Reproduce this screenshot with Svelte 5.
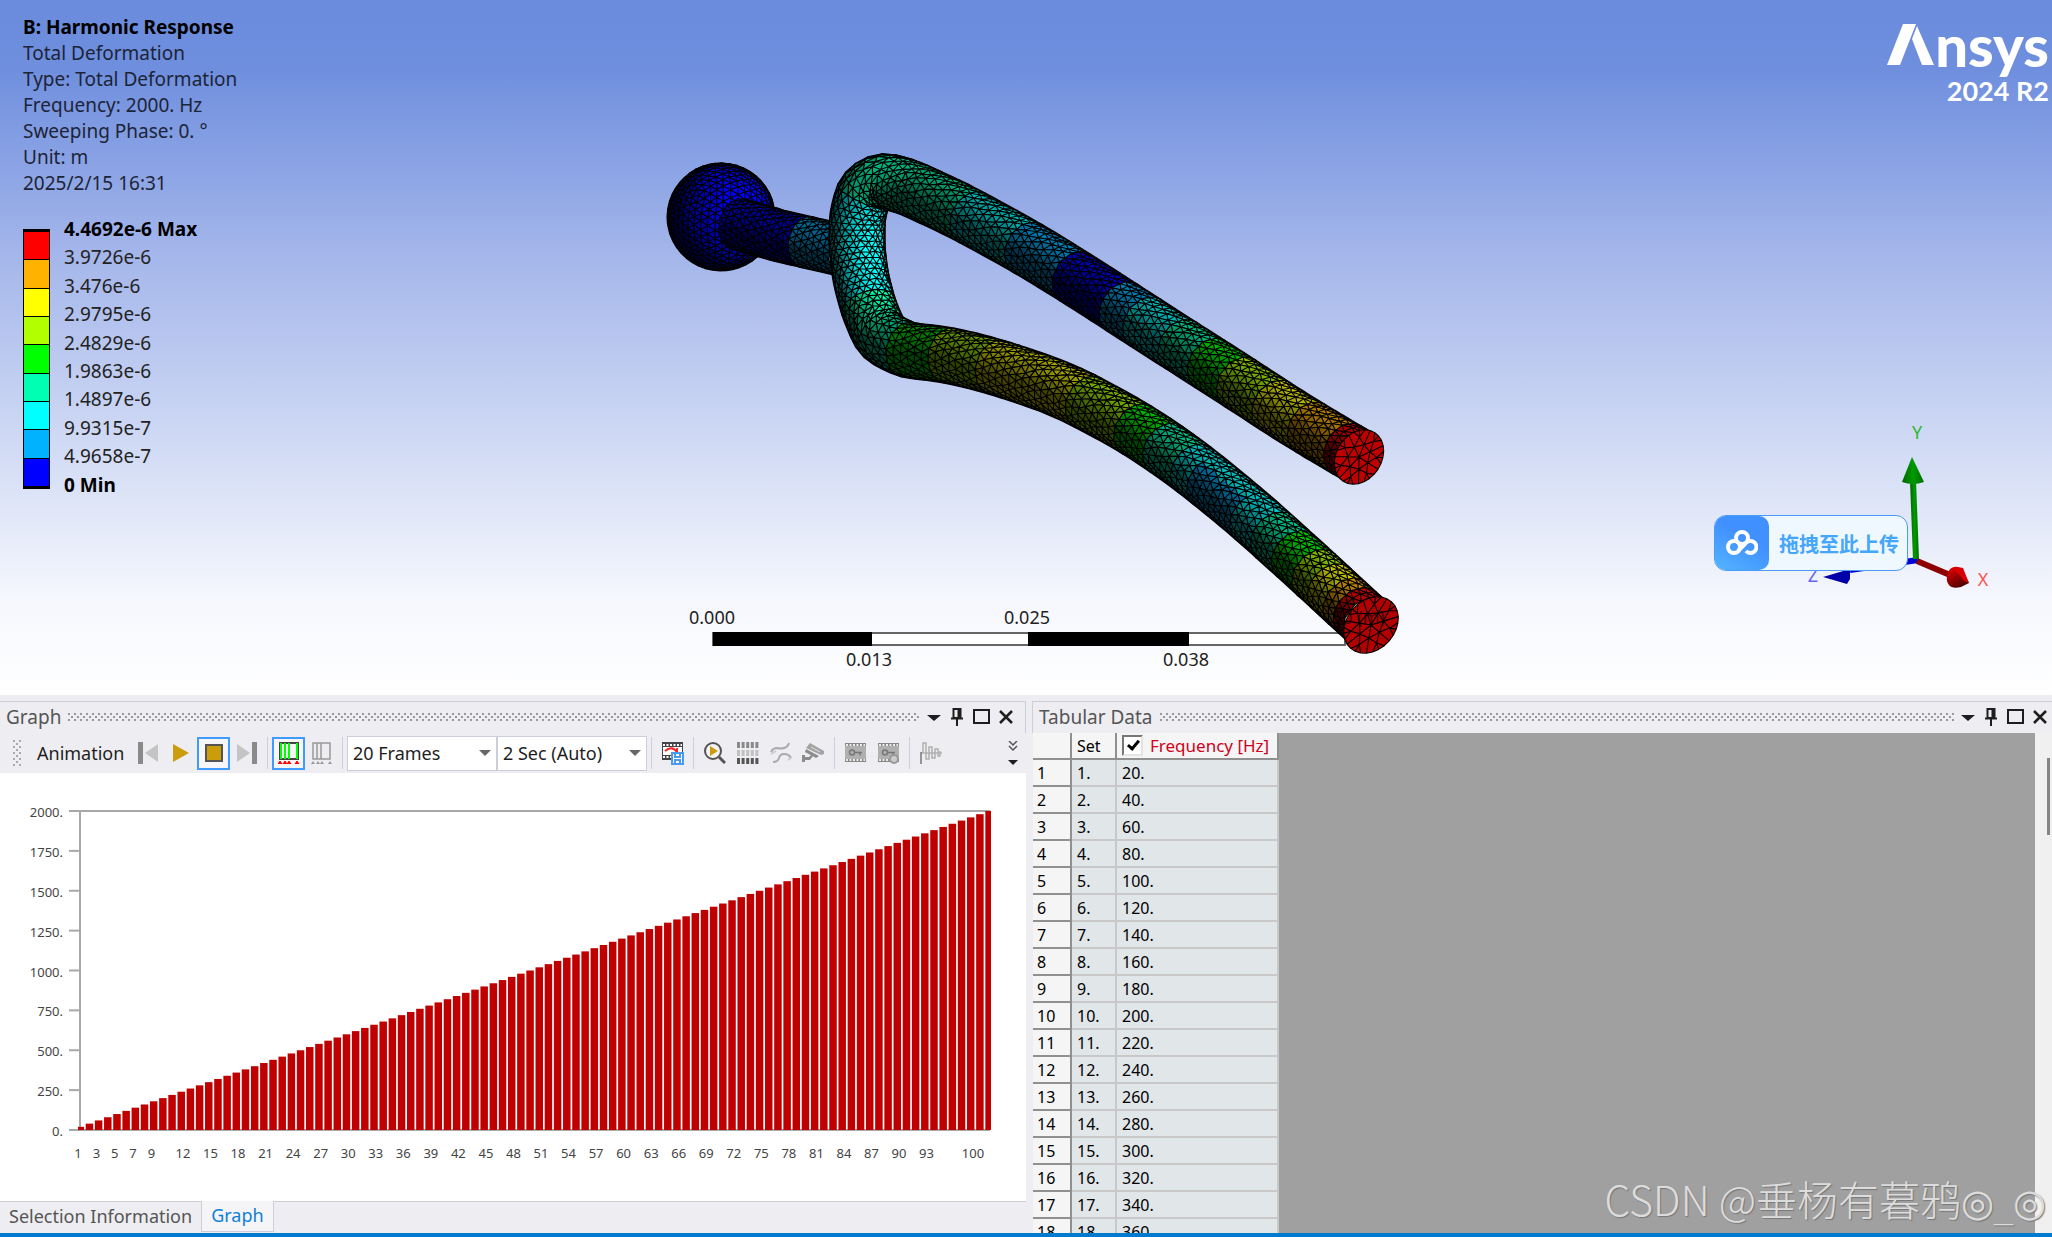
<script lang="ts">
    type Point = [number, number]
    type Face = { fill: string; d: string }

    const info = [
        "Total Deformation",
        "Type: Total Deformation",
        "Frequency: 2000. Hz",
        "Sweeping Phase: 0. °",
        "Unit: m",
        "2025/2/15 16:31",
    ]

    const legendLabels = [
        "4.4692e-6 Max",
        "3.9726e-6",
        "3.476e-6",
        "2.9795e-6",
        "2.4829e-6",
        "1.9863e-6",
        "1.4897e-6",
        "9.9315e-7",
        "4.9658e-7",
        "0 Min",
    ]

    // contour colours, max to min
    const RED = 0, ORANGE = 1, YELLOW = 2, LIME = 3, GREEN = 4, TEAL = 5, CYAN = 6, SKY = 7, BLUE = 8
    const bands = [
        [255, 0, 0],
        [255, 178, 0],
        [255, 255, 0],
        [178, 255, 0],
        [0, 255, 0],
        [0, 255, 178],
        [0, 255, 255],
        [0, 178, 255],
        [0, 0, 255],
    ]

    const light = [0.56, -0.32, 0.76]
    const steps = 20

    function addFace(faces: Map<string, string>, band: number, normal: number[], points: Point[]) {
        const dot = normal[0] * light[0] + normal[1] * light[1] + normal[2] * light[2]
        const level = Math.round(Math.min(1, 0.24 + 0.8 * Math.max(0, dot)) * steps) / steps
        const fill = `rgb(${bands[band].map((c) => Math.round(c * level)).join(",")})`
        const d = "M" + points.map((p) => p[0].toFixed(1) + " " + p[1].toFixed(1)).join("L") + "Z"
        faces.set(fill, (faces.get(fill) ?? "") + d)
    }

    function toList(faces: Map<string, string>): Face[] {
        return [...faces].map(([fill, d]) => ({ fill, d }))
    }

    // evenly spaced points along a polyline, corners rounded off
    function smooth(nodes: Point[], gap: number, reach: (x: number) => number): Point[] {
        const dense: Point[] = []
        for (let i = 0; i < nodes.length - 1; i++) {
            const [ax, ay] = nodes[i]
            const [bx, by] = nodes[i + 1]
            const n = Math.max(1, Math.round(Math.hypot(bx - ax, by - ay)))
            for (let j = 0; j < n; j++) dense.push([ax + ((bx - ax) * j) / n, ay + ((by - ay) * j) / n])
        }
        dense.push(nodes[nodes.length - 1])

        const out: Point[] = []
        for (let i = 0; i < dense.length; i += gap) {
            const r = Math.min(Math.round(reach(dense[i][0])), i, dense.length - 1 - i)
            let x = 0
            let y = 0
            for (let j = i - r; j <= i + r; j++) {
                x += dense[j][0]
                y += dense[j][1]
            }
            out.push([x / (2 * r + 1), y / (2 * r + 1)])
        }
        return out
    }

    function tube(
        path: Point[],
        radius: number,
        around: number,
        tilt: (i: number) => number,
        band: (c: Point, i: number, angle: number) => number,
    ): Face[] {
        const faces = new Map<string, string>()
        const dir = path.map((_, i) => {
            const a = path[Math.max(0, i - 1)]
            const b = path[Math.min(path.length - 1, i + 1)]
            const l = Math.hypot(b[0] - a[0], b[1] - a[1])
            return [(b[0] - a[0]) / l, (b[1] - a[1]) / l]
        })
        const angleAt = (i: number, j: number) => {
            const shift = i % 2 ? 0.5 : 0
            const a = ((j + shift) / around - 0.5) * Math.PI + Math.sin(i * 2.3 + j * 4.1) * 0.035
            return Math.max(-Math.PI / 2, Math.min(Math.PI / 2, a))
        }
        const normalAt = (i: number, a: number) => {
            const [tx, ty] = dir[i]
            const k = tilt(i)
            const s = Math.sin(a)
            const c = Math.cos(a)
            return [ty * s - tx * k * c, -tx * s - ty * k * c, c * Math.sqrt(1 - k * k)]
        }
        const at = (i: number, j: number): Point => {
            const n = normalAt(i, angleAt(i, j))
            const wobble = Math.sin(i * 5.7 + j * 3.3) * 0.8
            return [path[i][0] + n[0] * radius + dir[i][0] * wobble, path[i][1] + n[1] * radius + dir[i][1] * wobble]
        }
        const put = (corners: [number, number][]) => {
            const a = corners.reduce((sum, [i, j]) => sum + angleAt(i, j), 0) / 3
            const i = corners[0][0]
            addFace(faces, band(path[i], i, a), normalAt(i, a), corners.map(([i, j]) => at(i, j)))
        }

        for (let i = 0; i < path.length - 1; i++) {
            const odd = i % 2
            for (let j = -1; j < around; j++) {
                if (odd) {
                    put([[i, j], [i + 1, j], [i + 1, j + 1]])
                    put([[i, j], [i, j + 1], [i + 1, j + 1]])
                } else {
                    put([[i, j], [i, j + 1], [i + 1, j]])
                    put([[i, j + 1], [i + 1, j], [i + 1, j + 1]])
                }
            }
        }
        return toList(faces)
    }

    function ball(cx: number, cy: number, radius: number): Face[] {
        const faces = new Map<string, string>()
        const g = (1 + Math.sqrt(5)) / 2
        const unit = (v: number[]) => {
            const l = Math.hypot(v[0], v[1], v[2])
            return v.map((c) => c / l)
        }
        const turn = ([x, y, z]: number[]) => {
            const x1 = x * 0.83 + z * 0.56
            const z1 = z * 0.83 - x * 0.56
            return unit([x1, y * 0.9 - z1 * 0.44, z1 * 0.9 + y * 0.44])
        }
        const v = [
            [-1, g, 0], [1, g, 0], [-1, -g, 0], [1, -g, 0],
            [0, -1, g], [0, 1, g], [0, -1, -g], [0, 1, -g],
            [g, 0, -1], [g, 0, 1], [-g, 0, -1], [-g, 0, 1],
        ].map(turn)
        const index = [
            [0, 11, 5], [0, 5, 1], [0, 1, 7], [0, 7, 10], [0, 10, 11],
            [1, 5, 9], [5, 11, 4], [11, 10, 2], [10, 7, 6], [7, 1, 8],
            [3, 9, 4], [3, 4, 2], [3, 2, 6], [3, 6, 8], [3, 8, 9],
            [4, 9, 5], [2, 4, 11], [6, 2, 10], [8, 6, 7], [9, 8, 1],
        ]
        const mid = (a: number[], b: number[]) => unit([a[0] + b[0], a[1] + b[1], a[2] + b[2]])
        const split = (a: number[], b: number[], c: number[], depth: number) => {
            if (depth == 0) {
                const n = unit([a[0] + b[0] + c[0], a[1] + b[1] + c[1], a[2] + b[2] + c[2]])
                if (n[2] < -0.05) return
                addFace(faces, BLUE, n, [a, b, c].map((p): Point => [cx + p[0] * radius, cy + p[1] * radius]))
                return
            }
            const ab = mid(a, b)
            const bc = mid(b, c)
            const ca = mid(c, a)
            split(a, ab, ca, depth - 1)
            split(b, bc, ab, depth - 1)
            split(c, ca, bc, depth - 1)
            split(ab, bc, ca, depth - 1)
        }
        for (const [a, b, c] of index) split(v[a], v[b], v[c], 3)
        return toList(faces)
    }

    function cap(cx: number, cy: number, degrees: number, radius: number): Face[] {
        const faces = new Map<string, string>()
        const t = (degrees * Math.PI) / 180
        const k = 0.78
        const at = (r: number, turn: number): Point => {
            const s = Math.sin(turn * Math.PI * 2) * r * radius
            const c = Math.cos(turn * Math.PI * 2) * r * radius * k
            return [cx + Math.sin(t) * s + Math.cos(t) * c, cy - Math.cos(t) * s + Math.sin(t) * c]
        }
        const n = [k * Math.cos(t), 0, 0.36]
        const m = 7
        for (let i = 0; i < m; i++) {
            const a = i / m
            const b = (i + 1) / m
            const h = (i + 0.5) / m
            const q = (i + 0.25) / m
            const p = (i + 0.75) / m
            addFace(faces, RED, n, [[cx, cy], at(0.46, a), at(0.46, b)])
            addFace(faces, RED, n, [at(0.46, a), at(0.46, b), at(0.74, h)])
            addFace(faces, RED, n, [at(0.46, a), at(0.74, h), at(1, q), at(1, a)])
            addFace(faces, RED, n, [at(0.46, b), at(0.74, h), at(1, p), at(1, b)])
            addFace(faces, RED, n, [at(0.74, h), at(1, q), at(1, h)])
            addFace(faces, RED, n, [at(0.74, h), at(1, h), at(1, p)])
        }
        return toList(faces)
    }

    const fork = smooth(
        [
            [1359, 457], [1298, 421], [1232, 378], [1152, 327], [1092, 288], [1031, 250], [962, 212], [908, 187],
            [882, 180], [864, 191], [857, 218], [857, 250], [861, 280], [869, 309], [881, 337], [906, 350],
            [950, 355], [994, 366], [1062, 389], [1132, 426], [1188, 464], [1247, 512], [1307, 566], [1372, 626],
        ],
        7,
        (x) => Math.max(9, Math.min(30, (x - 880) / 3)),
    )
    const elbow = fork.reduce((best, p, i) => (p[0] < fork[best][0] ? i : best), 0)

    // where each contour band starts or ends along x
    const upper = [
        [1350, RED], [1314, ORANGE], [1281, YELLOW], [1245, LIME], [1211, GREEN], [1183, TEAL],
        [1150, CYAN], [1127, SKY], [1077, BLUE], [1034, SKY], [978, CYAN], [0, TEAL],
    ]
    const lower = [
        [904, TEAL], [944, GREEN], [996, LIME], [1088, YELLOW], [1132, LIME], [1165, GREEN], [1194, TEAL],
        [1270, CYAN], [1294, TEAL], [1313, GREEN], [1328, LIME], [1344, YELLOW], [1357, ORANGE], [9999, RED],
    ]

    function forkBand([x, y]: Point, i: number, angle: number) {
        if (i < elbow) {
            if (x < 890 && y > 196) return CYAN
            return upper.find(([end]) => x >= end)![1]
        }
        if (y < 300) return CYAN
        if (x > 1208 && x < 1252 && angle < 0.3) return SKY
        return lower.find(([end]) => x < end)![1]
    }

    const forkFaces = tube(
        fork,
        28,
        11,
        (i) => 0.78 * Math.max(-1, Math.min(1, (i - elbow) / 16)),
        forkBand,
    )
    const stemFaces = tube(
        smooth([[738, 224], [780, 236], [850, 252]], 6, () => 6),
        26,
        10,
        () => 0.72,
        ([x]) => (x > 806 ? SKY : BLUE),
    )
    const model = [
        ball(721, 217, 54),
        stemFaces,
        forkFaces,
        cap(1359, 457, 33, 29),
        cap(1371, 625, 41, 31),
    ]

    // graph
    const plot = { left: 80, right: 990, top: 38, bottom: 357 }
    const frequencies = Array.from({ length: 100 }, (_, i) => (i + 1) * 20)
    const barX = (set: number) => 80 + (set - 1) * 9.18
    const barWidth = (set: number) => (set == 1 ? 6 : Math.min(7.5, plot.right + 1 - barX(set) + 3.5))
    const valueY = (hz: number) => plot.bottom - (hz / 2000) * (plot.bottom - plot.top)
    const labelX = (set: number) => Math.min(973, barX(set) + (set < 10 ? -2 : 2))
    const yTicks = [2000, 1750, 1500, 1250, 1000, 750, 500, 250, 0]
    const xTicks = [1, 3, 5, 7, ...Array.from({ length: 29 }, (_, i) => 9 + i * 3), 100]

    const rows = frequencies.slice(0, 18)

    let frames = "20 Frames"
    let duration = "2 Sec (Auto)"
    let showFrequency = true
</script>

{#snippet panelButtons()}
    <div class="panel-buttons">
        <button aria-label="Window menu"><svg width="14" height="14"><path d="M0 5h14l-7 6z" fill="#1e1e1e" /></svg></button>
        <button aria-label="Auto hide">
            <svg width="14" height="18"><path d="M3.500 1h7v9h-7zM8.500 1v9M1 10.500h12M7 11v7" fill="none" stroke="#1e1e1e" stroke-width="2" /></svg>
        </button>
        <button aria-label="Maximize"><svg width="17" height="16"><path d="M1 1h15v13H1z" fill="none" stroke="#1e1e1e" stroke-width="2" /></svg></button>
        <button aria-label="Close"><svg width="14" height="14"><path d="M1 1l12 12M13 1L1 13" stroke="#1e1e1e" stroke-width="2.500" /></svg></button>
    </div>
{/snippet}

{#snippet film()}
    <path d="M0 2h21v17H0z" fill="#b0b0b0" />
    <path d="M0 2.500h21M0 18.500h21" stroke="#888" stroke-width="3" />
    <path d="M1 3h19M1 18h19" stroke="#eee" stroke-width="2" stroke-dasharray="2 1.500" />
    <circle cx="7" cy="10.500" r="2.500" fill="none" stroke="#777" stroke-width="1.500" />
    <path d="M9.500 10.500H17M15 10.500v3" stroke="#777" stroke-width="1.500" />
{/snippet}

<div class="app">
    <main class="scene">
        <svg class="model" viewBox="0 0 2052 695" role="img" aria-label="Deformed tuning fork">
            <g class="ruler">
                <rect x="713" y="633" width="632" height="12" fill="#fff" stroke="#666" stroke-width="2" />
                <rect x="713" y="632" width="159" height="14" />
                <rect x="1028" y="632" width="161" height="14" />
                <text x="712" y="624">0.000</text>
                <text x="1027" y="624">0.025</text>
                <text x="869" y="666">0.013</text>
                <text x="1186" y="666">0.038</text>
            </g>
            {#each model as part}
                <g class="mesh">
                    {#each part as face}
                        <path d={face.d} fill={face.fill} />
                    {/each}
                </g>
            {/each}
            <text class="hidden-label" x="1332" y="624">50 (m)</text>
        </svg>

        <header class="caption">
            <strong>B: Harmonic Response</strong>
            {#each info as line}
                <span>{line}</span>
            {/each}
        </header>

        <div class="legend">
            <div class="swatches">
                {#each bands as band}
                    <i style="background: rgb({band.join(',')})"></i>
                {/each}
            </div>
            <div class="labels">
                {#each legendLabels as label, i}
                    <span class:bold={i == 0 || i == 9}>{label}</span>
                {/each}
            </div>
        </div>

        <div class="brand">
            <div class="logo">
                <svg width="48" height="42" viewBox="0 0 48 42">
                    <path d="M16 0h13L13 41H0z" fill="#fff" />
                    <path d="M30 2L47 41H35L25 15z" fill="#fff" />
                </svg>
                <span>nsys</span>
            </div>
            <div class="release">2024 R2</div>
        </div>

        <svg class="triad" width="200" height="180" viewBox="0 -10 200 180">
            <defs>
                <linearGradient id="green"><stop stop-color="#006400" /><stop offset="0.5" stop-color="#009a00" /><stop offset="1" stop-color="#006e00" /></linearGradient>
                <linearGradient id="red" x2="0.6" y2="1"><stop stop-color="#f00000" /><stop offset="1" stop-color="#500000" /></linearGradient>
            </defs>
            <path d="M118 135L50 145" stroke="#0000d0" stroke-width="6" />
            <path d="M23 152L50 144V154L47 159z" fill="#0000a8" />
            <path d="M117 136L150 150" stroke="#8c0000" stroke-width="6" />
            <path d="M110 56h6l3 78h-6z" fill="url(#green)" />
            <path d="M112 32L124 57q-11 4-22 0z" fill="url(#green)" />
            <path d="M147 152q1-9 7-10 5-1 9 4l6 12-8 4q-9 2-12-2-3-4-2-8z" fill="url(#red)" />
            <path d="M151 145q4-4 12-2l6 15-6-3q-4-9-12-10z" fill="#d80000" />
            <text x="117" y="14" fill="#2eb82e">Y</text>
            <text x="183" y="161" fill="#ff5050">X</text>
            <text x="13" y="157" fill="#6464f0">Z</text>
        </svg>

        <button class="upload">
            <span class="upload-icon">
                <svg width="32" height="26" viewBox="0 0 32 26" fill="none" stroke="#fff" stroke-width="4">
                    <circle cx="16" cy="8" r="6" />
                    <circle cx="8" cy="17" r="6" />
                    <path d="M12 21L20 13a6 6 0 1 1 0 8" />
                </svg>
            </span>
            <span class="upload-text">拖拽至此上传</span>
        </button>
    </main>

    <div class="dock">
        <section class="panel graph">
            <div class="title">
                <h2>Graph</h2>
                <div class="dots"></div>
                {@render panelButtons()}
            </div>

            <div class="toolbar">
                <div class="grip"></div>
                <span class="toolbar-label">Animation</span>
                <button class="tool" aria-label="Previous frame">
                    <svg width="20" height="22"><path d="M0 0h5v22H0z" fill="#8a8a8a" /><path d="M20 2v18L7 11z" fill="#c4c4c4" /></svg>
                </button>
                <button class="tool" aria-label="Play">
                    <svg width="16" height="20"><path d="M0 1l16 9-16 9z" fill="#cb9c0c" /></svg>
                </button>
                <button class="tool active" aria-label="Stop">
                    <svg width="20" height="20"><path d="M2 2h16v16H2z" fill="#cb9c0c" stroke="#555" stroke-width="2" /></svg>
                </button>
                <button class="tool" aria-label="Next frame">
                    <svg width="20" height="22"><path d="M15 0h5v22h-5z" fill="#8a8a8a" /><path d="M0 2v18l13-9z" fill="#c4c4c4" /></svg>
                </button>
                <hr />
                <button class="tool active" aria-label="Distributed">
                    <svg width="22" height="22">
                        <path d="M2 1h18v16H2z" fill="none" stroke="#444" stroke-width="2" />
                        <path d="M3 1v16M7 1v16M11 1v16M19 1v16" stroke="#0f0" stroke-width="2" />
                        <path d="M0 22l2-3 2 3zM5 22l2-3 2 3zM9 22l2-3 2 3zM17 22l2-3 2 3z" fill="red" stroke="red" />
                    </svg>
                </button>
                <button class="tool" aria-label="Result sets">
                    <svg width="22" height="22">
                        <path d="M2 1h17v16H2zM6 1v16M10 1v16" fill="none" stroke="#999" stroke-width="1.500" />
                        <path d="M0 22l2-3 2 3zM5 22l2-3 2 3zM9 22l2-3 2 3zM17 22l2-3 2 3z" fill="#999" />
                    </svg>
                </button>
                <hr />
                <div class="selects">
                    <div class="select">
                        <select aria-label="Frames" bind:value={frames}>
                            <option>20 Frames</option>
                            <option>40 Frames</option>
                        </select>
                    </div>
                    <div class="select">
                        <select aria-label="Duration" bind:value={duration}>
                            <option>2 Sec (Auto)</option>
                            <option>4 Sec</option>
                        </select>
                    </div>
                </div>
                <hr />
                <button class="tool" aria-label="Export video">
                    <svg width="22" height="23">
                        <path d="M0 0h21v18H0z" fill="#444" />
                        <path d="M1 5h19v8H1z" fill="#fff" />
                        <path d="M1 3h19M1 15h19" stroke="#fff" stroke-width="2" stroke-dasharray="2 1.500" />
                        <path d="M3 9q7-6 12 1M15 6v5" fill="none" stroke="#f22" stroke-width="2" />
                        <path d="M10 11h11v11H10z" fill="#fff" stroke="#4a9af0" stroke-width="2" />
                        <path d="M13 11v4h5v-4M13 22v-4h5v4" fill="none" stroke="#4a9af0" stroke-width="2" />
                    </svg>
                </button>
                <hr />
                <button class="tool" aria-label="Zoom to result">
                    <svg width="22" height="22">
                        <circle cx="9" cy="9" r="8" fill="#f4f4f4" stroke="#555" stroke-width="2" />
                        <path d="M6 4l8 5-8 5z" fill="#cb9c0c" />
                        <path d="M15 15l6 6" stroke="#555" stroke-width="3" />
                    </svg>
                </button>
                <button class="tool" aria-label="Deformation scaling">
                    <svg width="22" height="22" stroke-width="6" stroke-dasharray="3 1.600">
                        <path d="M0 3h22" stroke="#8a8a8a" />
                        <path d="M0 11h22" stroke="#c0c0c0" />
                        <path d="M0 19h22" stroke="#555" />
                    </svg>
                </button>
                <button class="tool" aria-label="Path">
                    <svg width="22" height="22" fill="none" stroke="#aaa" stroke-width="2">
                        <path d="M1 10q2-4 6-4 4 1 7 0 4-1 5-5" />
                        <path d="M3 20q5 0 6-4t5-4q5 0 7 4" />
                        <path d="M1 12l5-3M18 18l3-2" stroke="#ccc" />
                    </svg>
                </button>
                <button class="tool" aria-label="Camera">
                    <svg width="23" height="22" fill="#a4a4a4">
                        <path d="M8 1l14 8v3l-3 1L4 6z" />
                        <path d="M4 7l13 7-3 2L3 10z" fill="#8c8c8c" />
                        <path d="M0 13h3v7H0zM3 15h4l2-2 2 1-3 4H3z" fill="#8c8c8c" />
                        <path d="M9 5l9 5" stroke="#ddd" />
                    </svg>
                </button>
                <hr />
                <button class="tool" aria-label="Keyframes"><svg width="22" height="22">{@render film()}</svg></button>
                <button class="tool" aria-label="Keyframe view">
                    <svg width="22" height="22">{@render film()}<circle cx="16" cy="17" r="4" fill="#ccc" stroke="#999" stroke-width="2" /></svg>
                </button>
                <hr />
                <button class="tool" aria-label="Signal">
                    <svg width="22" height="22" fill="none" stroke="#b0b0b0" stroke-width="1.500">
                        <path d="M3 11V1h3v16h3V5h3v11h3V7h3v7h2v-5" />
                        <path d="M1 11h21" />
                        <path d="M1 10v12" stroke="#777" />
                    </svg>
                </button>
                <button class="overflow" aria-label="Toolbar options">
                    <svg width="10" height="24"><path d="M1 0l4 4 4-4M1 5l4 4 4-4" fill="none" stroke="#555" stroke-width="1.500" /><path d="M0 19h10l-5 5z" fill="#1e1e1e" /></svg>
                </button>
            </div>

            <div class="chart">
                <svg viewBox="0 0 1026 428" role="img" aria-label="Frequency by set">
                    <path d="M69 {plot.top}H{plot.right}M{plot.left} {plot.top}V{plot.bottom}" class="axis" />
                    {#each yTicks as tick}
                        <path d="M69 {valueY(tick)}H{plot.left}" class="axis" />
                        <text x="63" y={valueY(tick) + 6} text-anchor="end">{tick}.</text>
                    {/each}
                    <path d="M69 {plot.bottom}H{plot.right}" class="axis" />
                    {#each frequencies as hz, i}
                        <rect x={barX(i + 1) - (i ? 3.5 : 2)} y={valueY(hz)} width={barWidth(i + 1)} height={plot.bottom - valueY(hz)} class="bar" />
                    {/each}
                    {#each xTicks as tick}
                        <text x={labelX(tick)} y="385" text-anchor="middle">{tick}</text>
                    {/each}
                </svg>
            </div>

            <nav class="tabs">
                <button>Selection Information</button>
                <button class="current">Graph</button>
            </nav>
        </section>

        <section class="panel tabular">
            <div class="title">
                <h2>Tabular Data</h2>
                <div class="dots"></div>
                {@render panelButtons()}
            </div>
            <div class="sheet">
                <table>
                    <thead>
                        <tr>
                            <th class="num"></th>
                            <th class="set">Set</th>
                            <th class="freq">
                                <label><input type="checkbox" bind:checked={showFrequency} />Frequency [Hz]</label>
                            </th>
                        </tr>
                    </thead>
                    <tbody>
                        {#each rows as hz, i}
                            <tr>
                                <th>{i + 1}</th>
                                <td>{i + 1}.</td>
                                <td>{hz}.</td>
                            </tr>
                        {/each}
                    </tbody>
                </table>
                <div class="scrollbar"><div class="thumb"></div></div>
            </div>
        </section>
    </div>

    <footer></footer>
    <div class="watermark">CSDN @垂杨有暮鸦<span>◎_◎</span></div>
</div>

<style>
    :global(body) {
        overflow: hidden;
    }

    .app {
        --ui: "Noto Sans", "Open Sans", "Noto Sans CJK SC", sans-serif;
        --line: #ccceDB;

        position: relative;
        display: flex;
        flex-direction: column;
        height: 100vh;
        overflow: hidden;
        font-family: var(--ui);
        font-size: 18px;
        color: #1e1e1e;
        background: #eeeef2;
    }

    button {
        padding: 0;
        border: 0;
        background: none;
        font: inherit;
        color: inherit;
    }

    svg {
        display: block;
    }

    /* 3d view */
    .scene {
        position: relative;
        flex: 1;
        min-height: 0;
        padding: 14px 23px;
        background: linear-gradient(#6a8adc, #6f8fde 10%, #a3b5ea 36%, #cad5f3 60%, #f5f7fd 86%, #fff);
    }

    .model {
        position: absolute;
        inset: 0;
        width: 100%;
        height: 100%;
    }

    .mesh {
        stroke: #000;
        stroke-width: 1.1px;
        stroke-linejoin: round;
    }

    .ruler text {
        text-anchor: middle;
        fill: #222;
    }

    .hidden-label {
        opacity: 0.6;
    }

    .caption {
        position: relative;
        display: flex;
        flex-direction: column;
        line-height: 26px;
        font-size: 19px;
        color: #1c2438;
    }

    .caption strong {
        color: #000;
    }

    .legend {
        position: relative;
        display: flex;
        gap: 14px;
        margin-top: 19px;
    }

    .swatches {
        display: flex;
        flex-direction: column;
        width: 27px;
        height: 260px;
        margin-top: 14px;
        box-sizing: border-box;
        border: solid #000;
        border-width: 3px 1px;
    }

    .swatches i {
        flex: 1;
    }

    .swatches i + i {
        border-top: 1px solid #000;
    }

    .labels {
        display: flex;
        flex-direction: column;
        height: 284px;
        font-size: 19px;
        color: #222;
    }

    .labels span {
        flex: 1;
        line-height: 28px;
    }

    .labels .bold {
        font-weight: bold;
        color: #000;
    }

    .brand {
        position: absolute;
        top: 24px;
        right: 3px;
        color: #fff;
        text-align: right;
        font-family: Lato, "Open Sans", sans-serif;
        font-weight: 900;
    }

    .logo {
        display: flex;
        height: 52px;
        font-size: 58px;
        line-height: 42px;
    }

    .release {
        font-size: 27px;
        line-height: 30px;
        font-weight: 700;
    }

    .triad {
        position: absolute;
        top: 415px;
        right: 52px;
    }

    .triad text {
        text-anchor: middle;
    }

    .upload {
        position: absolute;
        top: 515px;
        right: 144px;
        display: flex;
        align-items: center;
        width: 194px;
        height: 56px;
        border: 1px solid #4a9af8;
        border-radius: 12px;
        background: #f0f8ff;
        overflow: hidden;
    }

    .upload-icon {
        display: grid;
        place-items: center;
        width: 54px;
        height: 54px;
        border-radius: 0 10px 10px 0;
        background: linear-gradient(30deg, #53b4ff, #4190ff 60%);
    }

    .upload-text {
        padding-left: 10px;
        font-family: "Noto Sans CJK SC", sans-serif;
        font-size: 20px;
        font-weight: bold;
        color: #45a6fb;
    }

    /* docked panels */
    .dock {
        display: flex;
        gap: 6px;
        flex: 0 0 532px;
        padding-top: 6px;
        min-height: 0;
    }

    .panel {
        display: flex;
        flex-direction: column;
        min-width: 0;
    }

    .graph {
        flex: 1026;
    }

    .tabular {
        flex: 1020;
    }

    .title {
        display: flex;
        align-items: center;
        flex: 0 0 32px;
        box-sizing: border-box;
        gap: 7px;
        padding: 0 12px 2px 6px;
        border: solid var(--line);
        border-width: 1px 1px 0 0;
    }

    .tabular .title {
        padding-right: 5px;
        border-width: 1px 0 0 1px;
    }

    h2 {
        margin: 0;
        font-size: 19px;
        line-height: 24px;
        font-weight: normal;
        color: #555;
    }

    .dots {
        flex: 1;
        height: 8px;
        background-image: radial-gradient(circle at 1px 1px, #999 1px, transparent 1px),
            radial-gradient(circle at 4px 4px, #999 1px, transparent 1px);
        background-size: 6px 6px;
    }

    .panel-buttons {
        display: flex;
        align-items: center;
        gap: 9px;
    }

    .toolbar {
        display: flex;
        align-items: center;
        flex: 0 0 40px;
        padding: 0 8px 0 13px;
        background: #eeeef2;
    }

    .grip {
        width: 8px;
        height: 26px;
        margin-right: 16px;
        background-image: radial-gradient(circle at 1px 1px, #aaa 1px, transparent 1px),
            radial-gradient(circle at 4px 4px, #aaa 1px, transparent 1px);
        background-size: 6px 6px;
    }

    .toolbar-label {
        width: 94px;
    }

    .tool {
        display: grid;
        place-items: center;
        width: 33px;
        height: 33px;
        box-sizing: border-box;
    }

    .tool.active {
        border: 2px solid #3f9bff;
        background: #f6f6f8;
    }

    .toolbar hr {
        width: 1px;
        height: 32px;
        margin: 0 4px;
        border: 0;
        background: var(--line);
    }

    .selects {
        display: flex;
    }

    .select {
        position: relative;
        width: 150px;
    }

    .select::after {
        content: "";
        position: absolute;
        top: 14px;
        right: 6px;
        border: solid transparent;
        border-width: 6px 6px 0;
        border-top-color: #666;
        pointer-events: none;
    }

    select {
        appearance: none;
        width: 100%;
        height: 35px;
        padding: 0 5px;
        border: 1px solid var(--line);
        border-radius: 0;
        background: #fff;
        font: inherit;
        color: inherit;
    }

    .overflow {
        margin-left: auto;
    }

    .chart {
        flex: 1;
        min-height: 0;
        background: #fff;
    }

    .chart svg {
        width: 100%;
        height: 100%;
    }

    .chart text {
        font-size: 13px;
        fill: #444;
    }

    .axis {
        fill: none;
        stroke: #a8a8a8;
        stroke-width: 2px;
    }

    .bar {
        fill: #c00000;
    }

    .tabs {
        display: flex;
        flex: 0 0 32px;
        border-top: 1px solid var(--line);
        box-sizing: border-box;
        line-height: 24px;
        color: #555;
    }

    .tabs button {
        padding: 0 9px 2px;
        margin-bottom: 1px;
        border-right: 1px solid var(--line);
    }

    .tabs .current {
        margin-top: -1px;
        border-bottom: 1px solid var(--line);
        background: #f5f5f7;
        color: #0e80d8;
    }

    .sheet {
        flex: 1;
        min-height: 0;
        display: flex;
        justify-content: space-between;
        align-items: flex-start;
        margin-left: 1px;
        overflow: hidden;
        background: #a0a0a0;
    }

    table {
        border-collapse: separate;
        border-spacing: 0;
        font-size: 16px;
        color: #000;
        table-layout: fixed;
        width: 246px;
    }

    th,
    td {
        box-sizing: border-box;
        height: 27px;
        padding: 0 5px;
        line-height: 20px;
        text-align: left;
        font-weight: normal;
    }

    th {
        background: #f5f5f5;
        border: solid #909090;
        border-width: 0 2px 2px 0;
    }

    td {
        background: #e1e6e9;
        border: solid #c8c8c8;
        border-width: 0 2px 2px 0;
    }

    tbody th {
        padding-left: 4px;
    }

    .num {
        width: 39px;
    }

    .set {
        width: 45px;
    }

    .freq {
        font-size: 17px;
        color: #d0021b;
    }

    label {
        display: flex;
        align-items: center;
        gap: 7px;
        white-space: nowrap;
    }

    input {
        appearance: none;
        position: relative;
        width: 21px;
        height: 21px;
        margin: 0;
        box-sizing: border-box;
        border: 2px solid;
        border-color: #777 #e4e4e4 #e4e4e4 #777;
        background: #fff;
    }

    input:checked::after {
        content: "";
        position: absolute;
        left: 6px;
        top: 1px;
        width: 4px;
        height: 9px;
        border: solid #000;
        border-width: 0 3px 3px 0;
        rotate: 40deg;
    }

    .scrollbar {
        align-self: stretch;
        width: 17px;
        padding-top: 25px;
        box-sizing: border-box;
        background: #f0f0f0;
    }

    .thumb {
        width: 3px;
        height: 77px;
        margin-left: 12px;
        background: #858585;
    }

    footer {
        flex: 0 0 4px;
        background: #007acc;
    }

    .watermark {
        position: absolute;
        right: 6px;
        bottom: 4px;
        font-family: "Noto Sans CJK SC", sans-serif;
        font-weight: 300;
        font-size: 41px;
        line-height: 60px;
        color: #dcdcdc;
        text-shadow: 1px 1px 1px #777;
    }

    .watermark span {
        font-family: "DejaVu Sans", sans-serif;
        font-size: 38px;
    }
</style>
